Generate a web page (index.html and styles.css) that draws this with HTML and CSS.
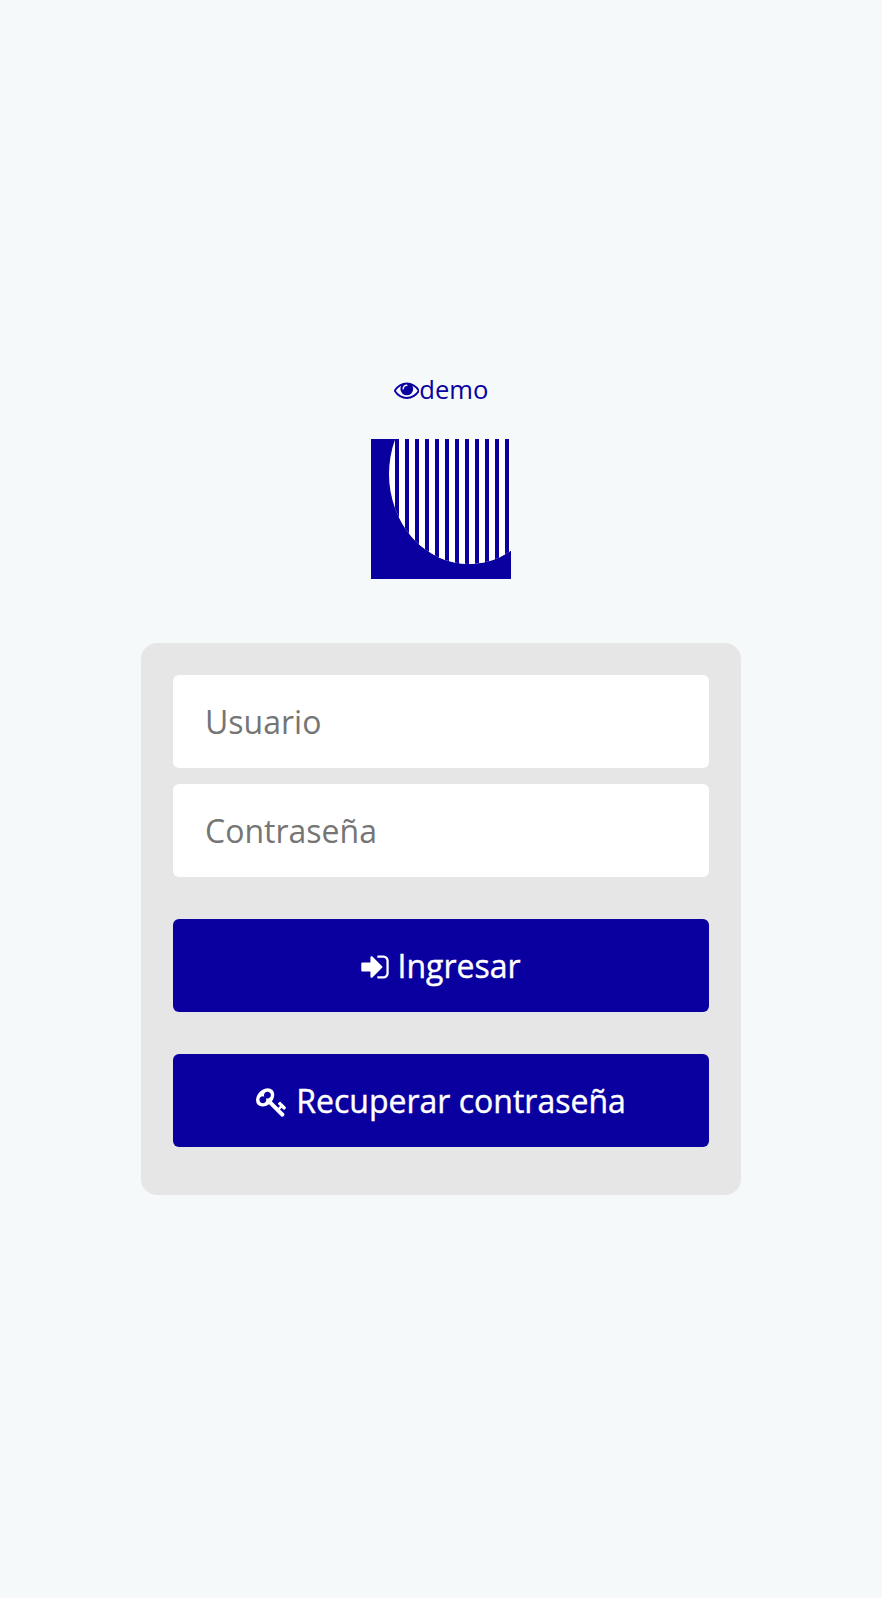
FILE: index.html
```html
<!DOCTYPE html>
<html lang="es">
<head>
<meta charset="utf-8">
<title>Ingresar</title>
<link rel="stylesheet" href="styles.css">
</head>
<body>
<main class="login">
  <a class="demo"><svg class="icon-eye" viewBox="0 0 1792 1792" fill="currentColor"><path d="M1664 960q-152-236-381-353 61 104 61 225 0 185-131.500 316.500t-316.500 131.500-316.500-131.500-131.500-316.500q0-121 61-225-229 117-381 353 133 205 333.500 326.500t434.500 121.500 434.500-121.500 333.500-326.500zm-720-384q0-20-14-34t-34-14q-125 0-214.500 89.500t-89.500 214.500q0 20 14 34t34 14 34-14 14-34q0-86 61-147t147-61q20 0 34-14t14-34zm848 384q0 34-20 69-140 230-376.500 368.500t-499.500 138.500-499.500-139-376.500-368q-20-35-20-69t20-69q140-229 376.500-368t499.500-139 499.500 139 376.500 368q20 35 20 69z"/></svg><span>demo</span></a>
  <svg class="logo" viewBox="0 0 140 140">
    <defs>
      <pattern id="stripes" x="24" y="0" width="10" height="140" patternUnits="userSpaceOnUse">
        <rect width="10" height="140" fill="#fff"/>
        <rect width="4" height="140" fill="#0a00a0"/>
      </pattern>
    </defs>
    <rect width="140" height="140" fill="#0a00a0"/>
    <ellipse cx="98" cy="35" rx="80" ry="90" fill="#fff"/>
    <clipPath id="striped"><rect x="24" y="0" width="116" height="140"/></clipPath>
    <g clip-path="url(#striped)"><ellipse cx="98" cy="35" rx="80" ry="90" fill="url(#stripes)"/></g>
  </svg>
  <form class="card">
    <input class="field" type="text" placeholder="Usuario">
    <input class="field" type="password" placeholder="Contraseña">
    <button class="button" type="button"><svg class="icon-enter" viewBox="128 0 1536 1792" fill="currentColor"><path d="M1312 896q0 26-19 45l-544 544q-19 19-45 19t-45-19-19-45v-288h-448q-26 0-45-19t-19-45v-384q0-26 19-45t45-19h448v-288q0-26 19-45t45-19 45 19l544 544q19 19 19 45zm352-352v704q0 119-84.500 203.500t-203.500 84.500h-320q-13 0-22.500-9.500t-9.500-22.500q0-4-1-20t-.5-26.500 3-23.500 10-19.500 20.500-6.500h320q66 0 113-47t47-113v-704q0-66-47-113t-113-47h-312l-11.500-1-11.500-3-8-5.500-7-9-2-13.500q0-4-1-20t-.5-26.500 3-23.500 10-19.500 20.500-6.500h320q119 0 203.500 84.500t84.500 203.500z"/></svg><span>Ingresar</span></button>
    <button class="button" type="button"><svg class="icon-key" viewBox="0 0 1792 1792" fill="currentColor"><path d="M832 512q0-80-56-136t-136-56-136 56-56 136q0 42 19 83-41-19-83-19-80 0-136 56t-56 136 56 136 136 56 136-56 56-136q0-42-19-83 41 19 83 19 80 0 136-56t56-136zm851 704q0 17-49 66t-66 49q-9 0-28.500-16t-36.500-33-38.500-40-24.500-26l-96 96 220 220q28 28 28 68 0 42-39 81t-81 39q-40 0-68-28l-671-671q-176 131-365 131-163 0-265.500-102.500t-102.500-265.500q0-160 95-313t248-248 313-95q163 0 265.500 102.500t102.500 265.500q0 189-131 365l355 355 96-96q-3-3-26-24.500t-40-38.500-33-36.500-16-28.500q0-17 49-66t66-49q13 0 23 10 6 6 46 44.500t82 79.500 86.500 86 73 78 28.500 41z"/></svg><span>Recuperar contraseña</span></button>
  </form>
</main>
</body>
</html>
```
FILE: styles.css
```css
* {
  box-sizing: border-box;
}

body {
  margin: 0;
  background: #f5f9fa;
  font-family: "Open Sans", sans-serif;
}

.login {
  display: flex;
  flex-direction: column;
  align-items: center;
  min-height: 1598px;
  padding-top: 371px;
}

.demo {
  display: flex;
  align-items: center;
  height: 36px;
  margin-bottom: 32px;
  color: #0a00a0;
  font-size: 25.6px;
  line-height: 36px;
}

.demo span {
  margin-top: 2px;
}

.icon-eye {
  width: 25.6px;
  height: 25.6px;
  margin-top: 2px;
}

.logo {
  width: 140px;
  height: 140px;
}

.card {
  display: flex;
  flex-direction: column;
  width: 600px;
  height: 552px;
  margin-top: 64px;
  padding: 32px;
  border-radius: 16px;
  background: #e6e6e6;
}

.field,
.button {
  flex: none;
  width: 100%;
  height: 93px;
  border: 0;
  border-radius: 6px;
  font: 32px/44px "Open Sans", sans-serif;
}

.field {
  margin-bottom: 16px;
  padding: 0 32px;
  background: #fff;
}

.field::placeholder {
  color: #757575;
}

.button {
  display: flex;
  align-items: center;
  justify-content: center;
  gap: 8px;
  margin: 26px 0 16px;
  padding: 0;
  background: #0a00a0;
  color: #fff;
  -webkit-text-stroke: 0.4px #fff;
}

.icon-enter {
  width: 28px;
  height: 32px;
  margin-top: 2px;
}

.icon-key {
  width: 32px;
  height: 32px;
  margin-top: 2px;
}
```
